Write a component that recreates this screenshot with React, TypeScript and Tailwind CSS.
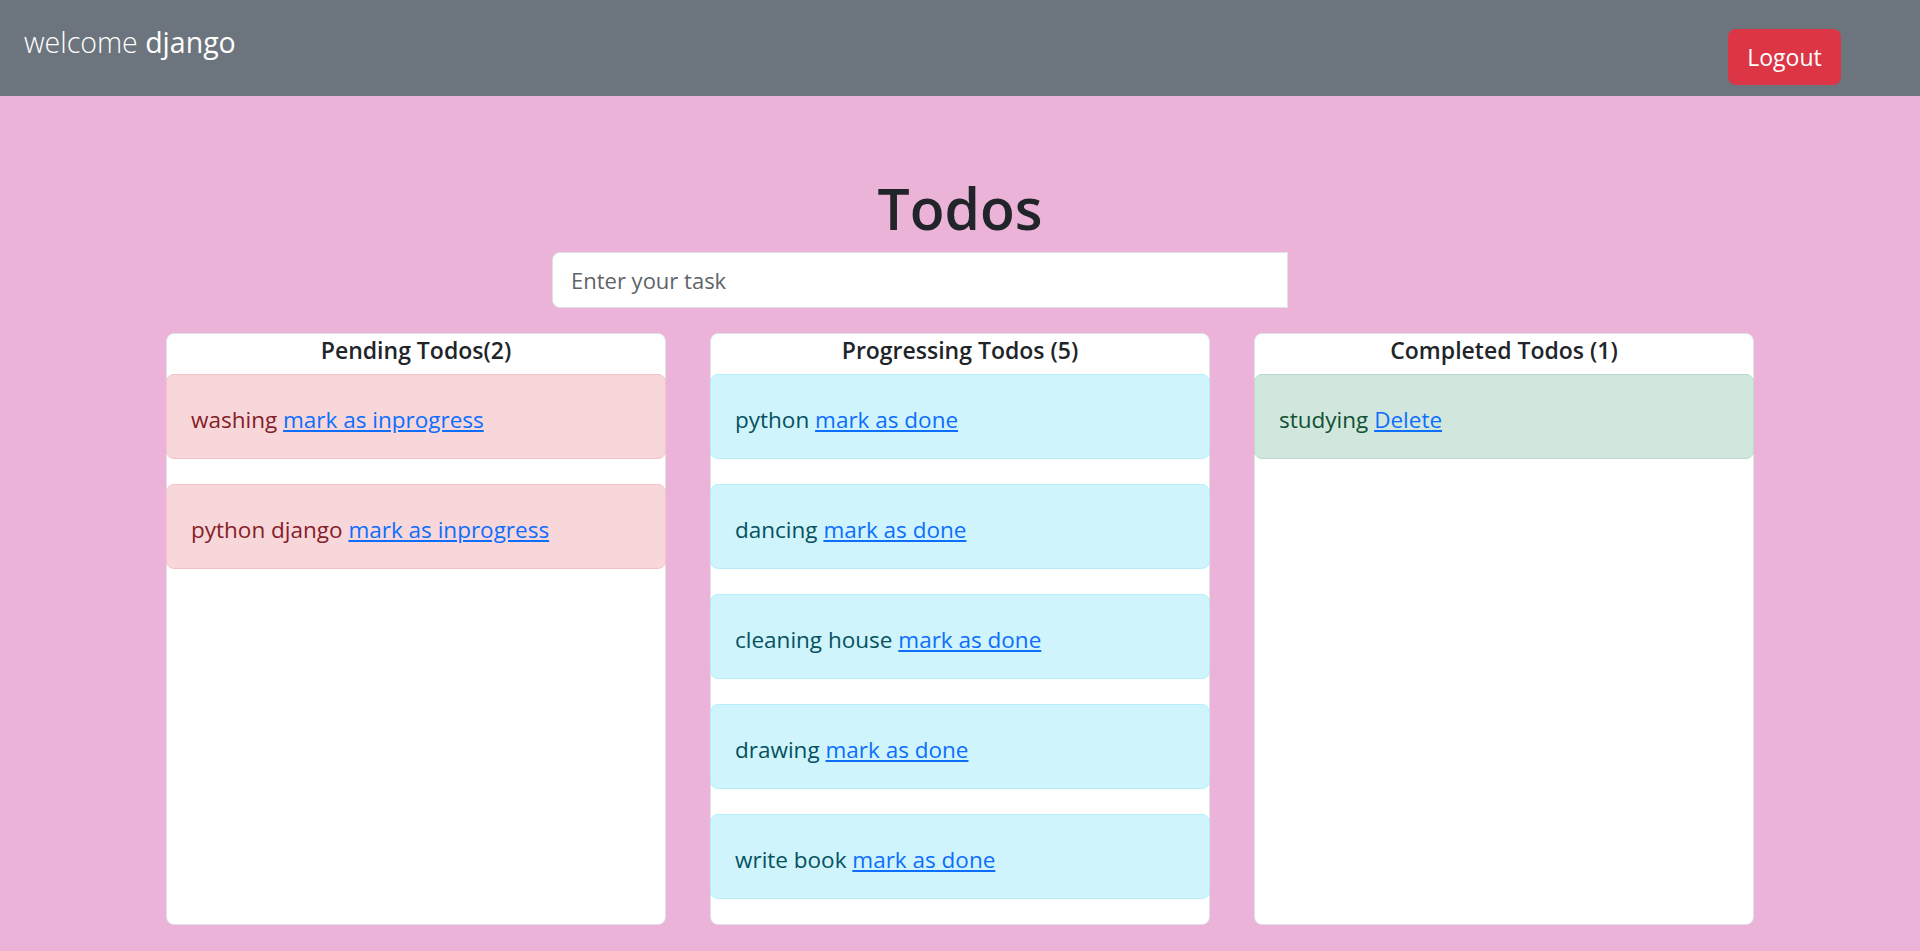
import React from 'react'

type Tone = 'danger' | 'info' | 'success'

type Todo = {
  title: string
  action: string
}

const toneClasses: Record<Tone, string> = {
  danger: 'bg-[#f8d7da] border-[#f5c2c7] text-[#842029]',
  info: 'bg-[#cff4fc] border-[#b6effb] text-[#055160]',
  success: 'bg-[#d1e7dd] border-[#badbcc] text-[#0f5132]',
}

const pending: Todo[] = [
  { title: 'washing', action: 'mark as inprogress' },
  { title: 'python django', action: 'mark as inprogress' },
]

const progressing: Todo[] = [
  { title: 'python', action: 'mark as done' },
  { title: 'dancing', action: 'mark as done' },
  { title: 'cleaning house', action: 'mark as done' },
  { title: 'drawing', action: 'mark as done' },
  { title: 'write book', action: 'mark as done' },
]

const completed: Todo[] = [{ title: 'studying', action: 'Delete' }]

function TodoColumn({ heading, todos, tone }: { heading: string; todos: Todo[]; tone: Tone }) {
  return (
    <div className="flex w-[500px] flex-col rounded-[8px] border border-[#dee2e6] bg-white pb-[25px]">
      <h5 className="pb-[8px] text-center text-[23px] leading-[32px] font-semibold text-[#212529]">
        {heading}
      </h5>
      <div className="flex flex-col gap-[25px]">
        {todos.map((todo) => (
          <div
            key={todo.title}
            className={`-mx-px rounded-[8px] border px-[24px] pt-[28px] pb-[22px] text-[22.5px] leading-[33px] ${toneClasses[tone]}`}
          >
            {todo.title}{' '}
            <a className="text-[#0d6efd] underline" href="#">
              {todo.action}
            </a>
          </div>
        ))}
      </div>
    </div>
  )
}

export default function App() {
  return (
    <div className="min-h-screen bg-[#ecb3d9] font-['Open_Sans','Noto_Sans',sans-serif]">
      <nav className="flex h-[96px] items-start justify-between bg-[#6c757d] pr-[79px] pl-[24px]">
        <span className="pt-[23px] text-[28.5px] leading-[38px] text-white">
          <span className="font-light">welcome</span> django
        </span>
        <button
          className="mt-[29px] flex h-[56px] w-[113px] items-center justify-center rounded-[8px] bg-[#dc3545] text-[23px] text-white"
          type="button"
        >
          Logout
        </button>
      </nav>

      <main className="flex flex-col items-center">
        <h1 className="mt-[78px] text-[57px] leading-[68px] font-semibold text-[#212529]">Todos</h1>
        <div className="mt-[10px] flex w-[816px]">
          <input
            className="h-[56px] w-[736px] flex-none rounded-l-[8px] border border-[#dee2e6] bg-white px-[18px] text-[22px] text-[#212529] outline-none placeholder:text-[#5f6468]"
            placeholder="Enter your task"
            type="text"
          />
        </div>

        <div className="mt-[25px] flex items-stretch gap-[44px]">
          <TodoColumn heading="Pending Todos(2)" todos={pending} tone="danger" />
          <TodoColumn heading="Progressing Todos (5)" todos={progressing} tone="info" />
          <TodoColumn heading="Completed Todos (1)" todos={completed} tone="success" />
        </div>
      </main>
    </div>
  )
}
